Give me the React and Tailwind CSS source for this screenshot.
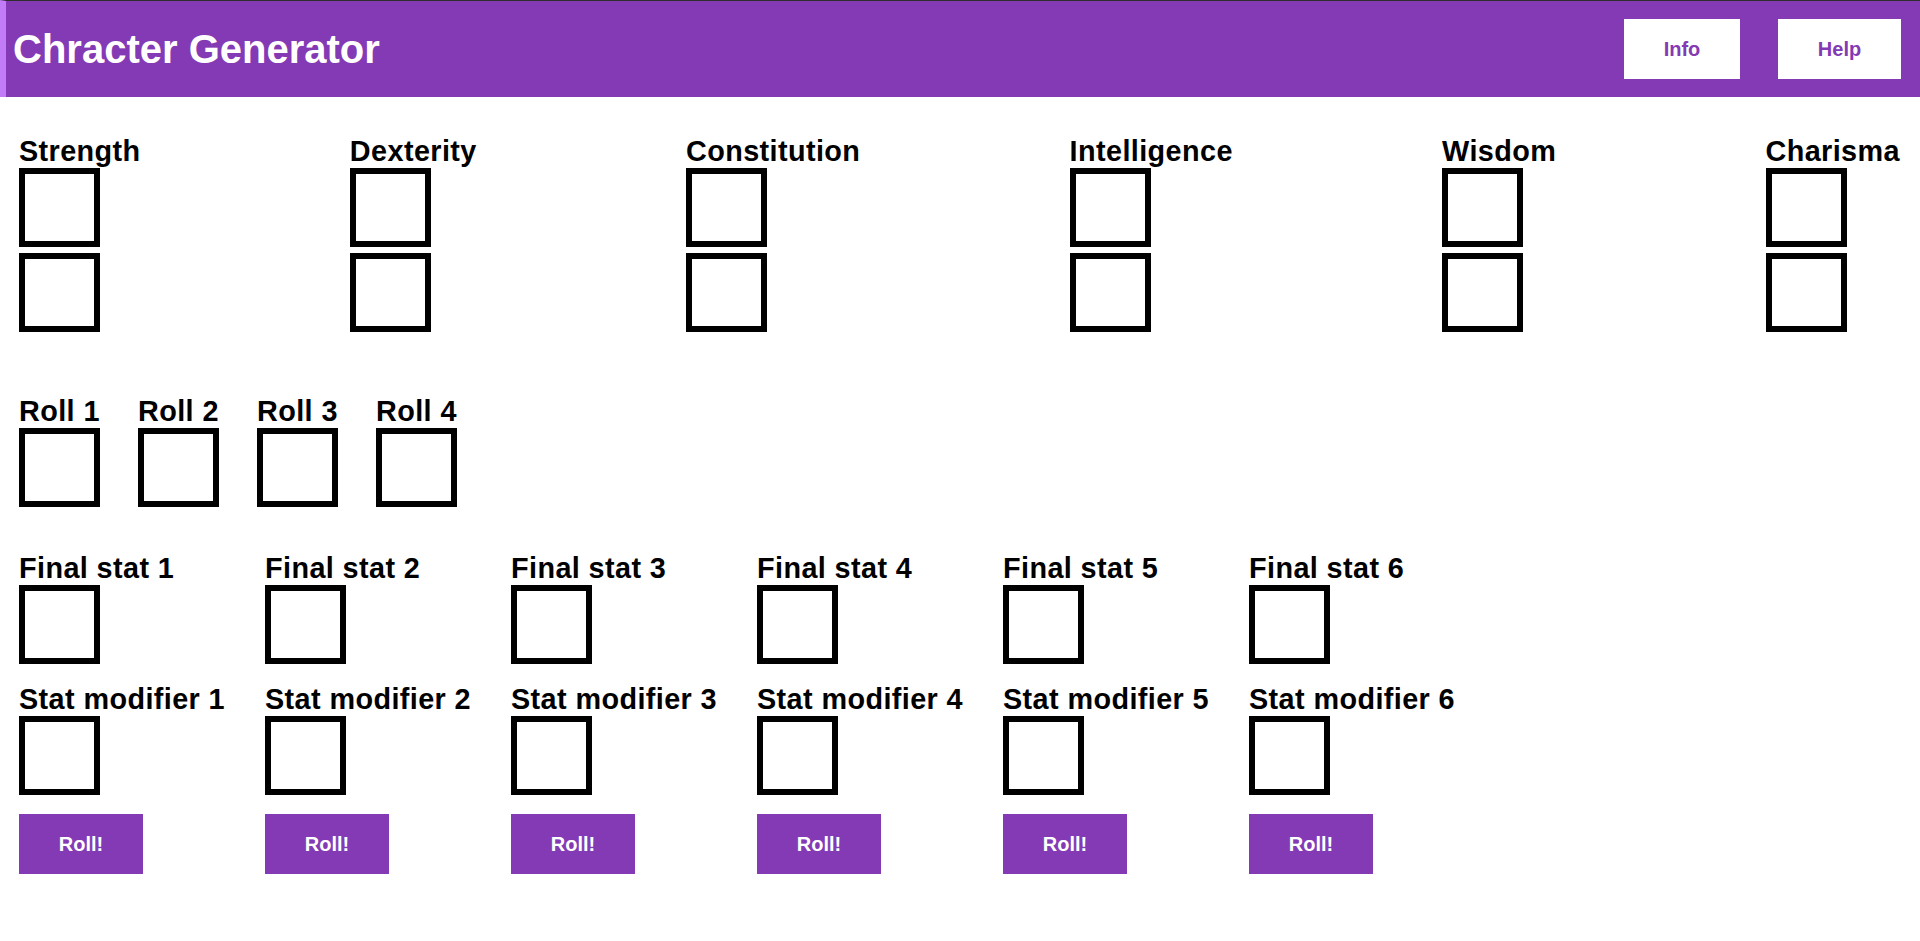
import React from "react";

const stats = ["Strength", "Dexterity", "Constitution", "Intelligence", "Wisdom", "Charisma"];
const rolls = ["Roll 1", "Roll 2", "Roll 3", "Roll 4"];
const finals = [1, 2, 3, 4, 5, 6];

const Box = () => <div className="w-[81px] h-[79px] border-[6px] border-black bg-white" />;

const Label = ({ children }) => (
  <div className="text-[28.8px] font-bold leading-[1.15] tracking-[0.4px] text-black whitespace-nowrap">
    {children}
  </div>
);

const App = () => {
  return (
    <div className="min-h-screen bg-white font-['Liberation_Sans',Arial,sans-serif]">
      <header className="flex items-center justify-between h-[97px] border-t border-[#2d2d2d] border-l-[6px] border-l-[#c27cf7] bg-[#843ab4] pl-[7px] pr-[19px]">
        <h1 className="text-[40px] font-bold leading-[1.15] text-white">Chracter Generator</h1>
        <div className="flex items-center gap-[38px]">
          <button className="w-[116px] h-[60px] bg-white text-[20px] font-bold text-[#843ab4]">Info</button>
          <button className="w-[123px] h-[60px] bg-white text-[20px] font-bold text-[#843ab4]">Help</button>
        </div>
      </header>

      <main className="pl-[19px] pr-[20px] pt-[38px]">
        <div className="flex justify-between">
          {stats.map((s) => (
            <div key={s} className="flex flex-col">
              <Label>{s}</Label>
              <div className="flex flex-col gap-[6px]">
                <Box />
                <Box />
              </div>
            </div>
          ))}
        </div>

        <div className="flex gap-[38px] mt-[63px]">
          {rolls.map((r) => (
            <div key={r} className="flex flex-col">
              <Label>{r}</Label>
              <Box />
            </div>
          ))}
        </div>

        <div className="flex mt-[45px]">
          {finals.map((n) => (
            <div key={n} className="flex flex-col w-[246px]">
              <Label>Final stat {n}</Label>
              <Box />
              <div className="mt-[19px]">
                <Label>Stat modifier {n}</Label>
              </div>
              <Box />
              <button className="mt-[19px] w-[124px] h-[60px] bg-[#843ab4] text-[20px] font-bold text-white">
                Roll!
              </button>
            </div>
          ))}
        </div>
      </main>
    </div>
  );
};

export default App;
